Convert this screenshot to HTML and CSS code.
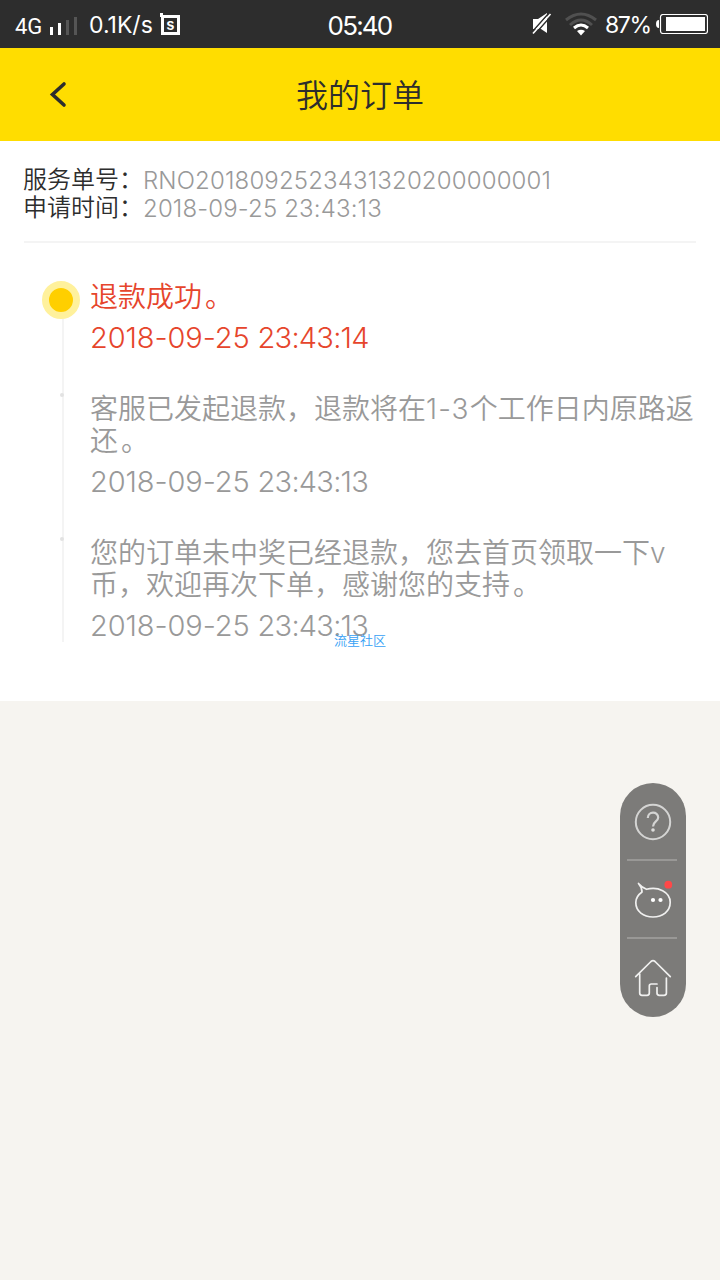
FILE: index.html
```html
<!DOCTYPE html>
<html lang="zh-CN">
<head>
<meta charset="utf-8">
<title>我的订单</title>
<link rel="stylesheet" href="styles.css">
</head>
<body>
<div class="status">
  <div class="status-left">
    <span class="network">4G</span>
    <svg class="signal" width="28" height="20" viewBox="0 0 28 20"><path d="M0 11h3v8H0zM8 7h3v12H8z" fill="#fff"/><path d="M16 4h3v15h-3zM24 1h3v18h-3z" fill="#555"/></svg>
    <span class="speed">0.1K/s</span>
    <svg class="app" width="20" height="22" viewBox="0 0 20 22"><path d="M0 0h3v2h17v20H1V4H0zM4 5v14h13V5z" fill="#fff" fill-rule="evenodd"/><text x="10.400" y="16.800" text-anchor="middle" class="app-letter">s</text></svg>
  </div>
  <time class="clock">05:40</time>
  <div class="status-right">
    <svg class="mute" width="20" height="22" viewBox="0 0 20 22"><path d="M1 6h5l9-6v20l-6-4H1z" fill="#fff"/><path d="M0 19L17 0M3 21L20 2" stroke="#2d2d2d" stroke-width="1.500"/><path d="M1 20.500L18.500 1" stroke="#fff" stroke-width="1.700"/></svg>
    <svg class="wifi" width="32" height="24" viewBox="0 0 32 24" fill="none" stroke-width="3"><path d="M1 8Q16-4 31 8M5 13Q16 3 27 13" stroke="#505050"/><path d="M9 16Q16 10 23 16" stroke="#fff"/><path d="M12 19Q16 16.500 20 19L16 23.500Z" fill="#fff"/></svg>
    <span class="percent">87%</span>
    <svg class="battery" width="52" height="20" viewBox="0 0 52 20"><path d="M3 6Q0 6 0 10t3 4z" fill="#fff"/><rect x="4.500" y=".5" width="47" height="19" rx="2.500" fill="none" stroke="#fff" stroke-width="1.200"/><path d="M10 3h39v14H10z" fill="#fff"/></svg>
  </div>
</div>
<header class="header">
  <svg class="back" width="18" height="28" viewBox="0 0 18 28"><path d="M15 3L3.500 13.500L15 24" fill="none" stroke="#2d2d2d" stroke-width="3.600" stroke-linecap="round"/></svg>
  <h1 class="title">我的订单</h1>
</header>
<main class="card">
  <section class="summary">
    <p class="row">服务单号：<span class="value">RNO2018092523431320200000001</span></p>
    <p class="row">申请时间：<span class="value">2018-09-25 23:43:13</span></p>
  </section>
  <ol class="timeline">
    <li class="event current"><p class="message">退款成功<span class="stop">。</span></p><time class="date">2018-09-25 <span class="hours">23:43:14</span></time></li>
    <li class="event"><p class="message">客服已发起退款，退款将在<span class="days">1-3</span>个工作日内原路返还<span class="stop">。</span></p><time class="date">2018-09-25 <span class="hours">23:43:13</span></time></li>
    <li class="event"><p class="message">您的订单未中奖已经退款，您去首页领取一下v<br>币，欢迎再次下单，感谢您的支持<span class="stop">。</span></p><time class="date">2018-09-25 <span class="hours">23:43:13</span></time></li>
  </ol>
</main>
<div class="watermark">流星社区</div>
<nav class="dock">
  <a class="dock-item"><svg width="40" height="40" viewBox="0 0 40 40" fill="none" stroke="#d4d4d3" stroke-width="2"><circle cx="20" cy="21" r="17.200"/><path d="M14.800 17C14.800 10 25.200 10 25.200 16.500C25.200 20.500 20 20.500 20 25.500" stroke-width="2.200"/><circle cx="20" cy="29" r="1.800" fill="#dededd" stroke="none"/></svg></a>
  <a class="dock-item"><svg width="40" height="40" viewBox="0 -1 40 40" fill="none" stroke="#f0f0ef" stroke-width="1.700"><path d="M9 12Q9 7.500 5.500 3.500Q9 7.500 13.500 9.300C25 6 37.200 12 37.200 22.300C37.200 31.500 29.500 37 20 37S2.800 31.500 2.800 22.500C2.800 18 5.500 14.500 9 12Z" stroke-linejoin="round"/><circle cx="20" cy="20" r="2.100" fill="#fff" stroke="none"/><circle cx="27.500" cy="20" r="2.100" fill="#fff" stroke="none"/><circle cx="35.300" cy="4.700" r="3.900" fill="#ff4848" stroke="none"/></svg></a>
  <a class="dock-item"><svg width="40" height="40" viewBox="0 0 40 40" fill="none" stroke="#f0f0ef" stroke-width="1.700" stroke-linecap="round" stroke-linejoin="round"><path d="M2.700 18.700L18 3.500Q20 1.700 22 3.500L37.300 18.700M6.700 16V35Q6.700 37.300 9 37.300H14Q16.300 37.300 16.300 35V28Q16.300 26 18.300 26H24M24 29.500V35Q24 37.300 26.300 37.300H31Q33.400 37.300 33.400 35V20"/></svg></a>
</nav>
</body>
</html>
```
FILE: styles.css
```css
*, *::before { box-sizing: border-box; }
body { margin: 0; height: 1280px; background: #f6f4f0; color: #2d2d2d; font-family: Inter, "Noto Sans CJK SC", sans-serif; font-weight: 350; overflow: hidden; }
p, h1, ol { margin: 0; padding: 0; font-weight: inherit; }
svg { display: block; flex: none; }
.status { height: 48px; display: grid; grid-template-columns: 1fr auto 1fr; align-items: center; padding: 0 12px 0 15px; background: #2d2d2d; color: #fff; white-space: nowrap; }
.status-left, .status-right { display: flex; align-items: center; }
.status-right { justify-content: flex-end; }
.network { font: 400 22px/26px Roboto, sans-serif; width: 35px; padding-top: 6px; }
.signal { margin-top: 4px; }
.speed { margin-left: 11px; width: 71px; padding-top: 2px; font-size: 23px; font-weight: 400; letter-spacing: 0; }
.app-letter { font: 600 15px Inter, sans-serif; fill: #fff; }
.clock { margin-right: 4px; font-size: 26px; font-weight: 400; letter-spacing: -1.8px; padding-top: 3px; }
.mute { margin-right: 13px; }
.wifi { margin-right: 8px; }
.percent { width: 51px; padding-top: 2px; font-size: 23px; font-weight: 400; letter-spacing: -1.4px; }
.header { height: 93px; display: grid; grid-template-columns: 1fr auto 1fr; align-items: center; padding: 0 49px; background: #fd0; }
.title { font-size: 32px; line-height: 40px; padding-top: 3px; }
.card { height: 560px; padding: 25px 24px 0; background: #fff; }
.summary { height: 77px; border-bottom: 2px solid #f4f4f4; }
.row { display: flex; margin-left: -1px; font-size: 24px; line-height: 28px; white-space: nowrap; }
.value { color: #999; letter-spacing: 0.15px; padding-top: 1px; margin-bottom: -1px; }
.timeline { list-style: none; position: relative; width: 680px; padding: 37px 0 0 66px; }
.timeline::before { content: ""; position: absolute; left: 38px; top: 75px; width: 2px; height: 324px; background: #f4f4f4; }
.event { position: relative; margin-bottom: 38px; color: #999; }
.event::before { content: ""; position: absolute; left: -30px; top: 1px; width: 4px; height: 4px; border-radius: 50%; background: #e2e2e2; }
.current { color: #e6452c; }
.current::before { left: -48px; top: 1px; width: 38px; height: 38px; border: 7px solid #fff19c; background: #ffcf00; }
.message { font-size: 28px; line-height: 32px; padding-top: 1px; margin-bottom: -1px; }
.days { letter-spacing: 1.1px; }
.stop { padding-left: 3px; }
.date { display: block; margin-top: 10px; font-size: 29px; line-height: 32px; letter-spacing: -0.1px; }
.hours { letter-spacing: -0.75px; }
.watermark { position: absolute; left: 334px; top: 632px; color: #37a1f5; font-size: 13px; font-weight: 350; line-height: 16px; }
.dock { position: absolute; left: 620px; top: 783px; width: 66px; height: 234px; padding: 0 7px; border-radius: 33px; background: #7c7b79; }
.dock-item { display: flex; justify-content: center; align-items: center; height: 78px; width: 50px; border-bottom: 2px solid #999896; }
.dock-item svg { margin-left: 2px; }
.dock-item:last-child { border: 0; }
```
